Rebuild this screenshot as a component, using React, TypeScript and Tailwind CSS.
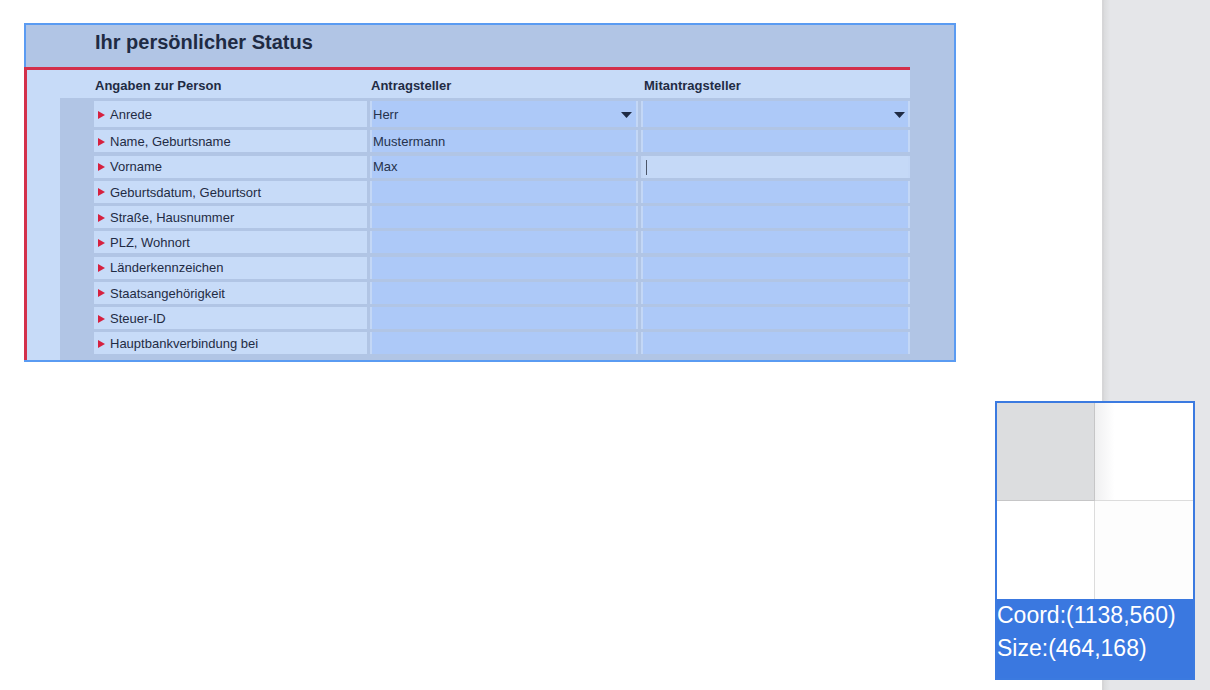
import React from "react";

type Row = { label: string; v1?: string; select?: boolean; focus?: boolean };

const rows: Row[] = [
  { label: "Anrede", v1: "Herr", select: true },
  { label: "Name, Geburtsname", v1: "Mustermann" },
  { label: "Vorname", v1: "Max", focus: true },
  { label: "Geburtsdatum, Geburtsort" },
  { label: "Straße, Hausnummer" },
  { label: "PLZ, Wohnort" },
  { label: "Länderkennzeichen" },
  { label: "Staatsangehörigkeit" },
  { label: "Steuer-ID" },
  { label: "Hauptbankverbindung bei" },
];

function Marker() {
  return (
    <svg width="7" height="8" viewBox="0 0 7 8" className="shrink-0">
      <polygon points="0,0 7,4 0,8" fill="#d6203f" />
    </svg>
  );
}

function Caret() {
  return (
    <svg width="11" height="6" viewBox="0 0 11 6" className="shrink-0">
      <polygon points="0,0 11,0 5.5,6" fill="#1f2b44" />
    </svg>
  );
}

function FormRow({ row }: { row: Row }) {
  const h = row.select ? "h-[26px] pt-[1px]" : "h-[22px] pt-[1px]";
  return (
    <div className={`flex ${h.split(" ")[0]}`}>
      <div className={`flex w-[273px] items-center gap-[5px] bg-[#c7dbf8] pl-[4px] text-[#1f2b44] ${h.split(" ")[1]}`}>
        <Marker />
        <span>{row.label}</span>
      </div>
      <div className="ml-[3px] flex w-[268px] items-center justify-between border-x-2 border-[#c3d7f6] bg-[#adc9f8] pl-[1px] pr-[4px] pt-[1px] text-[#25324c]">
        <span>{row.v1 ?? ""}</span>
        {row.select && <Caret />}
      </div>
      <div
        className={`ml-[3px] flex w-[269px] items-center justify-between border-x-2 border-[#c3d7f6] pl-[3px] pr-[3px] pt-[1px] ${
          row.focus ? "bg-[#c5d9f7]" : "bg-[#adc9f8]"
        }`}
      >
        {row.focus ? <div className="h-[15px] w-[1px] bg-[#4b5568]" /> : <span />}
        {row.select && <Caret />}
      </div>
    </div>
  );
}

export default function App() {
  return (
    <div className="relative flex h-[690px] w-[1210px] overflow-hidden bg-white font-['Liberation_Sans',Arial,sans-serif]">
      <div className="flex-1 pl-[24px] pt-[23px]">
        <div className="flex h-[339px] w-[932px] flex-col border-2 border-[#5a9bf2] bg-[#b1c5e5]">
          <div className="h-[42px] shrink-0 pl-[69px] pt-[5px] text-[20px] font-bold leading-[24px] text-[#1f2b44]">
            Ihr persönlicher Status
          </div>
          <div className="-ml-[2px] flex w-[886px] flex-1 flex-col border-l-[3px] border-t-[3px] border-[#d3304b] bg-[#c7dbf8] text-[13px]">
            <div className="flex h-[28px] shrink-0 items-center pl-[67px] pt-[3px] font-bold text-[#1f2b44]">
              <div className="w-[276px] pl-[1px]">Angaben zur Person</div>
              <div className="w-[271px] pl-[1px]">Antragsteller</div>
              <div className="pl-[3px]">Mitantragsteller</div>
            </div>
            <div className="flex flex-1">
              <div className="w-[33px] bg-[#c7dbf8]" />
              <div className="flex flex-1 flex-col gap-[3.25px] bg-[#b1c5e5] pl-[34px] pt-[3px]">
                {rows.map((r) => (
                  <FormRow key={r.label} row={r} />
                ))}
              </div>
            </div>
          </div>
        </div>
      </div>

      <div className="flex h-full w-[108px] bg-[#e5e6e9]">
        <div className="h-full w-[2px] bg-[#d6d6d8]" />
        <div className="h-full w-[6px] bg-linear-to-r from-[#dadbdd] to-[#e5e6e9]" />
      </div>

      <div className="absolute left-[995px] top-[401px] flex h-[279px] w-[200px] flex-col border-2 border-[#3b7ae0] bg-[#3a78e0]">
        <div className="grid h-[196px] shrink-0 grid-cols-[98px_1fr] grid-rows-[98px_1fr] bg-white">
          <div className="border-b border-r border-[#c6c6c7] bg-[#dcdddf]" />
          <div className="border-b border-[#dcdcdc] bg-linear-to-r from-[#f0f0f1] via-white via-20% to-white" />
          <div className="border-r border-[#dcdcdc] bg-white" />
          <div className="bg-[#fdfdfd]" />
        </div>
        <div className="flex-1 text-[23px] leading-[33px] text-white">
          <div>Coord:(1138,560)</div>
          <div>Size:(464,168)</div>
        </div>
      </div>
    </div>
  );
}
